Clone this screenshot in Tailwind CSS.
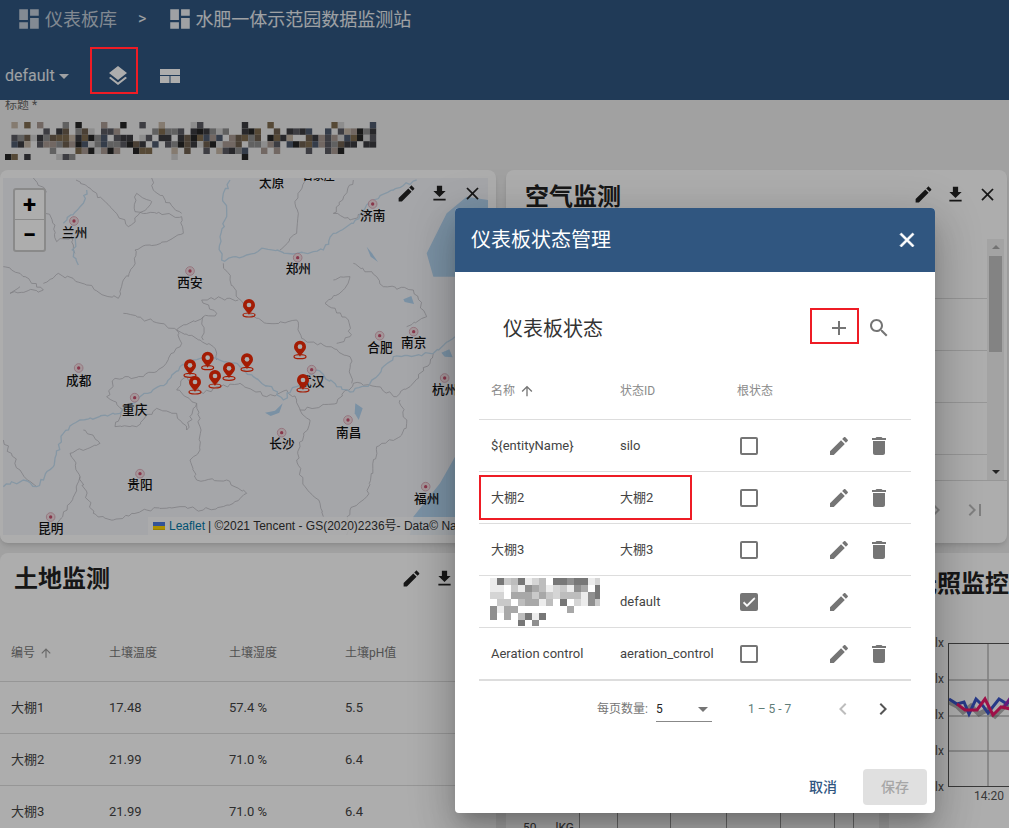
<!DOCTYPE html>
<html lang="zh">
  <head>
    <meta charset="UTF-8" />
    <meta name="viewport" content="width=device-width, initial-scale=1.0" />
    <title>仪表板状态管理</title>
    <script src="https://cdn.jsdelivr.net/npm/@tailwindcss/browser@4"></script>
  </head>
  <body class="font-[family-name:Roboto,'Noto_Sans_CJK_SC',sans-serif] bg-[#eeeeee]">
    <div class="relative h-[828px] w-[1009px] overflow-hidden">
      <!-- Header -->
      <header class="h-[100px] bg-[#305680] text-white">
        <div class="flex h-[38px] items-center pl-[16px]">
          <svg class="h-[26px] w-[26px] text-white/70" viewBox="0 0 24 24" fill="currentColor"><path d="M3 13h8V3H3v10zm0 8h8v-6H3v6zm10 0h8V11h-8v10zm0-18v6h8V3h-8z" /></svg>
          <span class="ml-[3px] text-[18px] text-white/70">仪表板库</span>
          <span class="ml-[21px] text-[16px] text-white/90">&gt;</span>
          <svg class="ml-[21px] h-[26px] w-[26px] text-white/90" viewBox="0 0 24 24" fill="currentColor"><path d="M3 13h8V3H3v10zm0 8h8v-6H3v6zm10 0h8V11h-8v10zm0-18v6h8V3h-8z" /></svg>
          <span class="ml-[2px] text-[18px] text-white/90">水肥一体示范园数据监测站</span>
        </div>
        <div class="flex h-[62px] items-center pl-[5px] pt-[14px]">
          <span class="text-[16px] text-white/90">default</span>
          <span class="ml-[4px] h-0 w-0 border-x-[5px] border-t-[5px] border-x-transparent border-t-white/90"></span>
          <svg class="ml-[37px] h-[24px] w-[24px]" viewBox="0 0 24 24" fill="white"><path d="M11.99 18.54l-7.37-5.73L3 14.07l9 7 9-7-1.63-1.27-7.38 5.74zM12 16l7.36-5.73L21 9l-9-7-9 7 1.63 1.27L12 16z" /></svg>
          <svg class="ml-[30px] h-[14px] w-[20px]" viewBox="0 0 20 14" fill="white"><path d="M0 0h20v6H0zM0 7h9.5v7H0zM10.5 7H20v7h-9.5z" /></svg>
        </div>
      </header>

      <!-- Dashboard title -->
      <div class="h-[70px] pl-[5px]">
        <div class="h-[12px] overflow-hidden text-[12px] leading-[10px] text-[#666]">标题 *</div>
        <svg id="title-mosaic" class="mt-[10px] block" width="374" height="38"></svg>
      </div>

      <!-- Row 1 -->
      <div class="flex gap-[10px]">
        <section class="relative h-[373px] w-[496px] shrink-0 rounded-[8px] bg-white pl-[3px] pt-[8px] shadow-md">
          <div class="relative h-[357px] w-[485px] overflow-hidden bg-[#f4f5fa]">
            <svg class="block" width="485" height="357" viewBox="9 24 1455 1071">
              <g fill="#b4d6f2">
                <path d="M1250 24H1464V90L1400 80L1340 130L1280 250L1300 320L1464 320V24Z" />
                <path d="M1365 860L1320 940L1240 1040L1230 1095H1464V860Z" />
                <path d="M795 728L825 722L848 700L838 728L812 738Z" />
                <path d="M1066 700L1088 715L1076 750L1064 730Z" />
                <path d="M1210 388L1234 378L1242 402L1214 396Z" />
                <path d="M1324 548L1348 538L1358 562L1334 560Z" />
                <path d="M1100 230L1116 250L1134 276L1112 260Z" />
              </g>
              <g class="rough" fill="none" stroke="#b6b6bc" stroke-width="2.2">
                <path d="M100 24L135 58L130 120L165 165L170 215L215 200L225 250" />
                <path d="M228 30L290 70L330 110L385 170L455 95L410 70L405 125L470 130L545 140L550 190L500 215L450 225L405 240L400 290L370 330L355 385L300 370L260 345L175 310L130 340" />
                <path d="M455 24L460 60L545 130" />
                <path d="M670 280L690 330L715 385L755 435L800 460L890 450L905 505L980 530L1050 560L1055 640" />
                <path d="M920 24L885 100L895 130L890 190L840 240" />
                <path d="M1060 30L1000 130L1050 150L1110 125" />
                <path d="M1000 330L1050 320L1030 360L975 400L1045 450L1050 500L1010 520" />
                <path d="M530 480L610 440L650 430L605 390L665 385L715 390" />
                <path d="M370 430L480 460L530 480L600 510L640 530L650 570" />
                <path d="M610 440L610 510" />
                <path d="M530 480L545 520L490 590L430 620L345 625L320 680L370 720L345 770L410 770L470 715L530 730L560 780L590 700L600 770L600 840L570 870L590 930L680 930L740 970L700 1000L610 1020L540 1010L440 1020L340 1050L280 1030L240 920L210 850L300 820L250 780" />
                <path d="M590 700L530 660L560 620L610 670L660 650L720 640L800 680L860 660L890 690L900 720L930 750L900 830L890 870L915 950L960 1000L970 1040" />
                <path d="M900 720L1010 700L1060 640L1130 650L1190 680L1230 650L1290 580L1300 550" />
                <path d="M1040 1095L1050 1020L1100 980L1130 830L1200 800L1220 760L1200 690" />
                <path d="M1060 280L1130 320L1150 350L1240 360L1280 440L1220 470" />
                <path d="M10 290L60 310L130 360L30 370L60 350" />
                <path d="M10 810L60 900L110 950" />
                <path d="M150 1095L210 1000L240 920" />
              </g>
              <g class="rough" fill="none" stroke="#c6dff2" stroke-width="4">
                <path d="M690 30L670 70L680 140L660 200L665 270L730 260L790 235L890 250L970 240L1000 190L1060 160L1120 90L1180 60L1250 30" />
                <path d="M10 950L70 930L110 950L160 890L190 790L240 750L360 730L420 680L500 640L540 590L580 570L650 565L720 590L760 620L820 660L850 690L890 650L950 600L1010 650L1060 665L1110 640L1180 560L1300 550L1365 500" />
                <path d="M225 200L220 260L235 285" />
                <path d="M260 60L250 100L190 160" />
              </g>
              <g font-size="38" font-weight="500" fill="#111" text-anchor="middle" dominant-baseline="central">
                <text x="815" y="38">太原</text>
                <text x="955" y="18" font-size="33">石家庄</text>
                <text x="1118" y="135">济南</text>
                <text x="224" y="188">兰州</text>
                <text x="895" y="296">郑州</text>
                <text x="570" y="338">西安</text>
                <text x="1140" y="533">合肥</text>
                <text x="1241" y="518">南京</text>
                <text x="236" y="630">成都</text>
                <text x="935" y="634">武汉</text>
                <text x="1334" y="659">杭州</text>
                <text x="404" y="719">重庆</text>
                <text x="1046" y="786">南昌</text>
                <text x="846" y="820">长沙</text>
                <text x="420" y="943">贵阳</text>
                <text x="1280" y="986">福州</text>
                <text x="152" y="1076">昆明</text>
              </g>
              <g fill="#f2dfe4" stroke="#d9a5b3" stroke-width="2.5">
                <circle cx="1118" cy="102" r="13" /><circle cx="222" cy="153" r="13" /><circle cx="893" cy="263" r="13" /><circle cx="570" cy="303" r="13" /><circle cx="1139" cy="497" r="13" /><circle cx="1241" cy="485" r="13" /><circle cx="236" cy="594" r="13" /><circle cx="935" cy="599" r="13" /><circle cx="1334" cy="624" r="13" /><circle cx="404" cy="683" r="13" /><circle cx="1044" cy="750" r="13" /><circle cx="845" cy="788" r="13" /><circle cx="420" cy="911" r="13" /><circle cx="1277" cy="950" r="13" /><circle cx="152" cy="1041" r="13" />
              </g>
              <g fill="#c9516f">
                <circle cx="1118" cy="102" r="5" /><circle cx="222" cy="153" r="5" /><circle cx="893" cy="263" r="5" /><circle cx="570" cy="303" r="5" /><circle cx="1139" cy="497" r="5" /><circle cx="1241" cy="485" r="5" /><circle cx="236" cy="594" r="5" /><circle cx="935" cy="599" r="5" /><circle cx="1334" cy="624" r="5" /><circle cx="404" cy="683" r="5" /><circle cx="1044" cy="750" r="5" /><circle cx="845" cy="788" r="5" /><circle cx="420" cy="911" r="5" /><circle cx="1277" cy="950" r="5" /><circle cx="152" cy="1041" r="5" />
              </g>
              <defs>
                <g id="pin">
                  <ellipse cx="0" cy="0" rx="18" ry="6" fill="none" stroke="#f02a06" stroke-width="3.5" />
                  <path d="M0 0C-6 -12 -18 -18 -18 -30A18 18 0 1 1 18 -30C18 -18 6 -12 0 0Z" fill="#f02a06" />
                  <circle cx="0" cy="-30" r="7" fill="#fff" />
                </g>
              </defs>
              <use href="#pin" x="747" y="435" /><use href="#pin" x="900" y="560" /><use href="#pin" x="623" y="593" /><use href="#pin" x="570" y="616" /><use href="#pin" x="741" y="598" /><use href="#pin" x="687" y="625" /><use href="#pin" x="645" y="648" /><use href="#pin" x="585" y="666" /><use href="#pin" x="909" y="660" />
            </svg>

            <!-- Zoom control -->
            <div class="absolute left-[10px] top-[10px] w-[33px] overflow-hidden rounded-[3px] border-2 border-black/20 bg-white text-black">
              <div class="flex h-[30px] items-center justify-center border-b border-[#ccc] text-[24px] font-bold leading-none">+</div>
              <div class="flex h-[30px] items-center justify-center text-[24px] font-bold leading-none">−</div>
            </div>

            <!-- Attribution -->
            <div class="absolute bottom-0 left-[145px] flex h-[18px] items-center whitespace-nowrap bg-white/80 pl-[5px] font-[family-name:'Liberation_Sans','Noto_Sans_CJK_SC',sans-serif] text-[12px] text-[#333]">
              <svg class="mr-[4px]" width="12" height="8" viewBox="0 0 12 8"><path fill="#4C7BE1" d="M0 0h12v4H0z" /><path fill="#FFD500" d="M0 4h12v3H0z" /><path fill="#E0BC00" d="M0 7h12v1H0z" /></svg>
              <span class="border-b border-[#0078A8] text-[#0078A8]">Leaflet</span>
              <span class="ml-[3px]">| ©2021 Tencent - GS(2020)2236号- Data© NavInfo</span>
            </div>
          </div>
          <div class="absolute right-[13px] top-[13px] flex gap-[12px] text-[#222]">
            <svg class="h-[21px] w-[21px]" viewBox="0 0 24 24" fill="currentColor"><path d="M3 17.25V21h3.75L17.81 9.94l-3.75-3.75L3 17.25zM20.71 7.04c.39-.39.39-1.02 0-1.41l-2.34-2.34c-.39-.39-1.02-.39-1.41 0l-1.83 1.83 3.75 3.75 1.83-1.83z" /></svg>
            <svg class="h-[21px] w-[21px]" viewBox="0 0 24 24" fill="currentColor"><path d="M19 9h-4V3H9v6H5l7 7 7-7zM5 18v2h14v-2H5z" /></svg>
            <svg class="h-[21px] w-[21px]" viewBox="0 0 24 24" fill="currentColor"><path d="M19 6.41L17.59 5 12 10.59 6.41 5 5 6.41 10.59 12 5 17.59 6.41 19 12 13.41 17.59 19 19 17.59 13.41 12z" /></svg>
          </div>
        </section>

        <section class="relative h-[373px] w-[501px] shrink-0 rounded-[8px] bg-white shadow-md">
          <div class="flex h-[69px] items-start justify-between pl-[19px] pr-[9px] pt-[14px]">
            <h2 class="text-[24px] font-bold leading-[26px] text-[#222]">空气监测</h2>
            <div class="flex gap-[11px] text-[#222]">
              <svg class="h-[21px] w-[21px]" viewBox="0 0 24 24" fill="currentColor"><path d="M3 17.25V21h3.75L17.81 9.94l-3.75-3.75L3 17.25zM20.71 7.04c.39-.39.39-1.02 0-1.41l-2.34-2.34c-.39-.39-1.02-.39-1.41 0l-1.83 1.83 3.75 3.75 1.83-1.83z" /></svg>
              <svg class="h-[21px] w-[21px]" viewBox="0 0 24 24" fill="currentColor"><path d="M19 9h-4V3H9v6H5l7 7 7-7zM5 18v2h14v-2H5z" /></svg>
              <svg class="h-[21px] w-[21px]" viewBox="0 0 24 24" fill="currentColor"><path d="M19 6.41L17.59 5 12 10.59 6.41 5 5 6.41 10.59 12 5 17.59 6.41 19 12 13.41 17.59 19 19 17.59 13.41 12z" /></svg>
            </div>
          </div>
          <div class="flex h-[242px] border-b border-[#ddd] pr-[3px]">
            <div class="flex-1">
              <div class="h-[60px] border-b border-[#ddd]"></div>
              <div class="h-[52px] border-b border-[#ddd]"></div>
              <div class="h-[52px] border-b border-[#ddd]"></div>
              <div class="h-[52px] border-b border-[#ddd]"></div>
            </div>
            <div class="flex w-[17px] flex-col items-center bg-[#f1f1f1] text-[#777]">
              <div class="mt-[6px] h-0 w-0 border-x-[4px] border-b-[4px] border-x-transparent border-b-[#aaa]"></div>
              <div class="mt-[7px] h-[96px] w-[13px] bg-[#c1c1c1]"></div>
              <div class="mb-[6px] mt-auto h-0 w-0 border-x-[4px] border-t-[4px] border-x-transparent border-t-[#333]"></div>
            </div>
          </div>
          <div class="flex justify-end gap-[15px] pr-[20px] pt-[17px] text-[#bbb]">
            <svg class="h-[24px] w-[24px]" viewBox="0 0 24 24" fill="currentColor"><path d="M10 6L8.59 7.41 13.17 12l-4.58 4.58L10 18l6-6z" /></svg>
            <svg class="h-[24px] w-[24px]" viewBox="0 0 24 24" fill="currentColor"><path d="M5.59 7.41L10.18 12l-4.59 4.59L7 18l6-6-6-6zM16 6h2v12h-2z" /></svg>
          </div>
        </section>
      </div>

      <!-- Row 2 -->
      <div class="mt-[10px] flex gap-[10px]">
        <section class="h-[300px] w-[496px] shrink-0 rounded-t-[8px] bg-white">
          <div class="flex h-[70px] items-start justify-between pl-[14px] pr-[41px] pt-[12px]">
            <h2 class="text-[24px] font-bold leading-[28px] text-[#222]">土地监测</h2>
            <div class="flex gap-[12px] pt-[3px] text-[#222]">
              <svg class="h-[21px] w-[21px]" viewBox="0 0 24 24" fill="currentColor"><path d="M3 17.25V21h3.75L17.81 9.94l-3.75-3.75L3 17.25zM20.71 7.04c.39-.39.39-1.02 0-1.41l-2.34-2.34c-.39-.39-1.02-.39-1.41 0l-1.83 1.83 3.75 3.75 1.83-1.83z" /></svg>
              <svg class="h-[21px] w-[21px]" viewBox="0 0 24 24" fill="currentColor"><path d="M19 9h-4V3H9v6H5l7 7 7-7zM5 18v2h14v-2H5z" /></svg>
            </div>
          </div>
          <div class="grid h-[59px] grid-cols-[98px_120px_116px_1fr] items-center border-b border-[#ddd] pl-[11px] pt-[1px] text-[12px] text-[#777]">
            <span class="flex items-center gap-[4px]">编号
              <svg class="h-[14px] w-[14px] text-[#999]" viewBox="0 0 24 24" fill="currentColor"><path d="M4 12l1.41 1.41L11 7.83V20h2V7.83l5.58 5.59L20 12l-8-8-8 8z" /></svg>
            </span>
            <span>土壤温度</span><span>土壤湿度</span><span>土壤pH值</span>
          </div>
          <div class="grid h-[52px] grid-cols-[98px_120px_116px_1fr] items-center border-b border-[#ddd] pl-[11px] text-[13px] text-[#444]">
            <span>大棚1</span><span>17.48</span><span>57.4 %</span><span>5.5</span>
          </div>
          <div class="grid h-[52px] grid-cols-[98px_120px_116px_1fr] items-center border-b border-[#ddd] pl-[11px] text-[13px] text-[#444]">
            <span>大棚2</span><span>21.99</span><span>71.0 %</span><span>6.4</span>
          </div>
          <div class="grid h-[52px] grid-cols-[98px_120px_116px_1fr] items-center border-b border-[#ddd] pl-[11px] text-[13px] text-[#444]">
            <span>大棚3</span><span>21.99</span><span>71.0 %</span><span>6.4</span>
          </div>
        </section>

        <section class="h-[300px] w-[373px] shrink-0 rounded-t-[8px] bg-white pt-[240px]">
          <div class="grid h-[60px] grid-cols-[74px_38px_53px_56px_54px_54px_19px_25px] text-[12px] text-[#444]">
            <div class="flex justify-between border-r border-[#999] pl-[17px] pr-[5px] pt-[26px]"><span>50</span><span>lKG</span></div>
            <div class="border-r border-[#999]"></div><div class="border-r border-[#999]"></div><div class="border-r border-[#999]"></div><div class="border-r border-[#999]"></div><div class="border-r border-[#999]"></div><div class="border-r border-[#999]"></div><div></div>
          </div>
        </section>

        <section class="h-[300px] w-[130px] shrink-0 rounded-t-[8px] bg-white">
          <div class="h-[83px] whitespace-nowrap pl-[24px] pt-[15px] text-[24px] font-bold leading-[32px] text-[#222]">光照监控</div>
          <div class="flex pl-[46px]">
            <div class="flex h-[158px] w-[13px] flex-col justify-between text-[12px] leading-[14px] text-[#555]">
              <span>lx</span><span>lx</span><span>lx</span><span>lx</span><span>lx</span>
            </div>
            <div class="relative mt-[7px] h-[144px] w-[71px] border-b border-l border-t border-[#555]">
              <svg class="block" width="70" height="142" viewBox="0 0 70 142" fill="none">
                <path d="M0 36H70M0 72H70M0 107H70M39 0V142" stroke="#bbb" stroke-width="1.5" />
                <path d="M0 58L8 62L14 68L22 62L30 70L38 66L46 72L56 62L70 66" stroke="#666" stroke-width="5" opacity=".5" />
                <path d="M0 55L8 60L15 58L20 70L27 55L34 62L39 69L50 55L58 60L64 52L70 57" stroke="#3a55c8" stroke-width="3" />
                <path d="M55 63L62 53L70 60" stroke="#9c27b0" stroke-width="3" />
                <path d="M8 60L16 66L28 66L36 55L44 71L52 63L62 65L70 60" stroke="#e9186b" stroke-width="3" />
              </svg>
              <span class="absolute left-[25px] top-full mt-[3px] text-[12px] leading-[14px] text-[#555]">14:20</span>
            </div>
          </div>
        </section>
      </div>

      <!-- Dim overlay -->
      <div class="absolute inset-0 bg-black/[.32]"></div>

      <!-- Modal -->
      <div class="absolute left-[455px] top-[208px] flex h-[605px] w-[480px] flex-col overflow-hidden rounded-[4px] bg-white shadow-[0_11px_15px_-7px_rgba(0,0,0,.2),0_24px_38px_3px_rgba(0,0,0,.14),0_9px_46px_8px_rgba(0,0,0,.12)]">
        <div class="flex h-[64px] shrink-0 items-center justify-between bg-[#305680] pl-[16px] pr-[16px] text-white">
          <h2 class="text-[20px]">仪表板状态管理</h2>
          <svg class="h-[24px] w-[24px]" viewBox="0 0 24 24" fill="white" stroke="white" stroke-width=".7"><path d="M19 6.41L17.59 5 12 10.59 6.41 5 5 6.41 10.59 12 5 17.59 6.41 19 12 13.41 17.59 19 19 17.59 13.41 12z" /></svg>
        </div>

        <div class="mx-[24px] flex flex-1 flex-col">
          <div class="mt-[36px] flex h-[40px] items-center pl-[24px] pr-[20px]">
            <h3 class="flex-1 pt-[2px] text-[20px] font-normal text-[#333]">仪表板状态</h3>
            <svg class="h-[24px] w-[24px] text-[#757575]" viewBox="0 0 24 24" fill="currentColor"><path d="M19 13h-6v6h-2v-6H5v-2h6V5h2v6h6v2z" /></svg>
            <svg class="ml-[16px] h-[24px] w-[24px] text-[#757575]" viewBox="0 0 24 24" fill="currentColor"><path d="M15.5 14h-.79l-.28-.27C15.41 12.59 16 11.11 16 9.5 16 5.91 13.09 3 9.5 3S3 5.91 3 9.5 5.91 16 9.5 16c1.61 0 3.09-.59 4.23-1.57l.27.28v.79l5 4.99L20.49 19l-4.99-5zm-6 0C7.01 14 5 11.99 5 9.5S7.01 5 9.5 5 14 7.01 14 9.5 11.99 14 9.5 14z" /></svg>
          </div>

          <div class="mt-[13px] grid h-[59px] grid-cols-[129px_117px_1fr] items-center border-b border-[#ddd] pl-[12px] pt-[1px] text-[12px] text-[#8a8a8a]">
            <span class="flex items-center gap-[4px]">名称
              <svg class="h-[16px] w-[16px] text-[#757575]" viewBox="0 0 24 24" fill="currentColor"><path d="M4 12l1.41 1.41L11 7.83V20h2V7.83l5.58 5.59L20 12l-8-8-8 8z" /></svg>
            </span>
            <span>状态ID</span>
            <span>根状态</span>
          </div>

          <div class="grid h-[52px] grid-cols-[129px_117px_90px_1fr] items-center border-b border-[#ddd] pl-[12px] text-[13px] text-[#444]">
            <span>${entityName}</span><span>silo</span>
            <span class="ml-[3px] h-[18px] w-[18px] rounded-[2px] border-2 border-[#757575]"></span>
            <span class="flex gap-[16px] text-[#757575]">
              <svg class="h-[24px] w-[24px]" viewBox="0 0 24 24" fill="currentColor"><path d="M3 17.25V21h3.75L17.81 9.94l-3.75-3.75L3 17.25zM20.71 7.04c.39-.39.39-1.02 0-1.41l-2.34-2.34c-.39-.39-1.02-.39-1.41 0l-1.83 1.83 3.75 3.75 1.83-1.83z" /></svg>
              <svg class="h-[24px] w-[24px]" viewBox="0 0 24 24" fill="currentColor"><path d="M6 19c0 1.1.9 2 2 2h8c1.1 0 2-.9 2-2V7H6v12zM19 4h-3.5l-1-1h-5l-1 1H5v2h14V4z" /></svg>
            </span>
          </div>
          <div class="grid h-[52px] grid-cols-[129px_117px_90px_1fr] items-center border-b border-[#ddd] pl-[12px] text-[13px] text-[#444]">
            <span>大棚2</span><span>大棚2</span>
            <span class="ml-[3px] h-[18px] w-[18px] rounded-[2px] border-2 border-[#757575]"></span>
            <span class="flex gap-[16px] text-[#757575]">
              <svg class="h-[24px] w-[24px]" viewBox="0 0 24 24" fill="currentColor"><path d="M3 17.25V21h3.75L17.81 9.94l-3.75-3.75L3 17.25zM20.71 7.04c.39-.39.39-1.02 0-1.41l-2.34-2.34c-.39-.39-1.02-.39-1.41 0l-1.83 1.83 3.75 3.75 1.83-1.83z" /></svg>
              <svg class="h-[24px] w-[24px]" viewBox="0 0 24 24" fill="currentColor"><path d="M6 19c0 1.1.9 2 2 2h8c1.1 0 2-.9 2-2V7H6v12zM19 4h-3.5l-1-1h-5l-1 1H5v2h14V4z" /></svg>
            </span>
          </div>
          <div class="grid h-[52px] grid-cols-[129px_117px_90px_1fr] items-center border-b border-[#ddd] pl-[12px] text-[13px] text-[#444]">
            <span>大棚3</span><span>大棚3</span>
            <span class="ml-[3px] h-[18px] w-[18px] rounded-[2px] border-2 border-[#757575]"></span>
            <span class="flex gap-[16px] text-[#757575]">
              <svg class="h-[24px] w-[24px]" viewBox="0 0 24 24" fill="currentColor"><path d="M3 17.25V21h3.75L17.81 9.94l-3.75-3.75L3 17.25zM20.71 7.04c.39-.39.39-1.02 0-1.41l-2.34-2.34c-.39-.39-1.02-.39-1.41 0l-1.83 1.83 3.75 3.75 1.83-1.83z" /></svg>
              <svg class="h-[24px] w-[24px]" viewBox="0 0 24 24" fill="currentColor"><path d="M6 19c0 1.1.9 2 2 2h8c1.1 0 2-.9 2-2V7H6v12zM19 4h-3.5l-1-1h-5l-1 1H5v2h14V4z" /></svg>
            </span>
          </div>
          <div class="grid h-[52px] grid-cols-[129px_117px_90px_1fr] items-center border-b border-[#ddd] pl-[12px] text-[13px] text-[#444]">
            <svg id="name-mosaic" width="110" height="48" class="-ml-[1px]"></svg>
            <span>default</span>
            <span class="ml-[3px] flex h-[18px] w-[18px] items-center justify-center rounded-[2px] bg-[#757575]">
              <svg class="h-[16px] w-[16px]" viewBox="0 0 24 24" fill="white" stroke="white"><path d="M9 16.17L4.83 12l-1.42 1.41L9 19 21 7l-1.41-1.41z" /></svg>
            </span>
            <span class="flex gap-[16px] text-[#757575]">
              <svg class="h-[24px] w-[24px]" viewBox="0 0 24 24" fill="currentColor"><path d="M3 17.25V21h3.75L17.81 9.94l-3.75-3.75L3 17.25zM20.71 7.04c.39-.39.39-1.02 0-1.41l-2.34-2.34c-.39-.39-1.02-.39-1.41 0l-1.83 1.83 3.75 3.75 1.83-1.83z" /></svg>
            </span>
          </div>
          <div class="grid h-[53px] grid-cols-[129px_117px_90px_1fr] items-center border-b-2 border-[#ddd] pl-[12px] text-[13px] text-[#444]">
            <span>Aeration control</span><span>aeration_control</span>
            <span class="ml-[3px] h-[18px] w-[18px] rounded-[2px] border-2 border-[#757575]"></span>
            <span class="flex gap-[16px] text-[#757575]">
              <svg class="h-[24px] w-[24px]" viewBox="0 0 24 24" fill="currentColor"><path d="M3 17.25V21h3.75L17.81 9.94l-3.75-3.75L3 17.25zM20.71 7.04c.39-.39.39-1.02 0-1.41l-2.34-2.34c-.39-.39-1.02-.39-1.41 0l-1.83 1.83 3.75 3.75 1.83-1.83z" /></svg>
              <svg class="h-[24px] w-[24px]" viewBox="0 0 24 24" fill="currentColor"><path d="M6 19c0 1.1.9 2 2 2h8c1.1 0 2-.9 2-2V7H6v12zM19 4h-3.5l-1-1h-5l-1 1H5v2h14V4z" /></svg>
            </span>
          </div>

          <!-- Pagination -->
          <div class="flex h-[56px] items-center pl-[118px] text-[12px] text-[#757575]">
            <span class="w-[59px]">每页数量:</span>
            <span class="flex h-[26px] w-[56px] items-center justify-between border-b border-[#888] pr-[4px] pt-[1px] text-[#222]">5
              <span class="h-0 w-0 border-x-[5px] border-t-[5px] border-x-transparent border-t-[#757575]"></span>
            </span>
            <span class="ml-[36px] w-[60px] text-[#5f7d78]">1 – 5 - 7</span>
            <svg class="ml-[23px] h-[24px] w-[24px] text-[#bdbdbd]" viewBox="0 0 24 24" fill="currentColor"><path d="M15.41 7.41L14 6l-6 6 6 6 1.41-1.41L10.83 12z" /></svg>
            <svg class="ml-[16px] h-[24px] w-[24px] text-[#555]" viewBox="0 0 24 24" fill="currentColor"><path d="M10 6L8.59 7.41 13.17 12l-4.58 4.58L10 18l6-6z" /></svg>
          </div>
        </div>

        <div class="flex shrink-0 items-center justify-end pb-[8px] pr-[8px]">
          <button class="mr-[26px] text-[14px] font-medium text-[#305680]">取消</button>
          <button class="h-[36px] w-[64px] rounded-[4px] bg-[#e0e0e0] text-[14px] font-medium text-[#a6a6a6]">保存</button>
        </div>
      </div>

      <!-- Annotation boxes -->
      <div class="absolute left-[90px] top-[47px] h-[47px] w-[48px] border-2 border-[#ee1c25]"></div>
      <div class="absolute left-[810px] top-[308px] h-[36px] w-[49px] border-2 border-[#ee1c25]"></div>
      <div class="absolute left-[479px] top-[475px] h-[45px] w-[213px] border-2 border-[#ee1c25]"></div>
    </div>

    <script>
      var seed = 7;
      function rnd() { seed = (seed * 16807) % 2147483647; return seed / 2147483647; }

      // pixelated blocks that hide the real names in the screenshot
      function mosaic(id, cols, rows, size, colors, keep) {
        var out = "";
        for (var y = 0; y < rows; y++) {
          for (var x = 0; x < cols; x++) {
            if (!keep(x, y, rnd())) continue;
            var c = colors[Math.floor(rnd() * colors.length)];
            out += '<rect x="' + x * size + '" y="' + y * size + '" width="' + size + '" height="' + size + '" fill="' + c + '"/>';
          }
        }
        document.getElementById(id).innerHTML = out;
      }
      mosaic("title-mosaic", 58, 6, 6.4,
        ["#3b3b40", "#6d5f4e", "#8f8f90", "#c4b6a6", "#4f5a6e", "#7f6c50", "#d0d0d0", "#262626", "#a89a92", "#5a5a62", "#3b3b40"],
        function (x, y, r) {
          var band = x < 7 || (x > 42 && x < 52) ? 0.75 : 0.3;
          if (y == 0) return r > 0.7;
          if (y == 5) return r > 0.8 && x < 50;
          if (y == 1) return r > band;
          if (y == 4) return x < 54 && r > band;
          return x > 0 && r > 0.1;
        });
      mosaic("name-mosaic", 18, 7, 7,
        ["#bdbdbd", "#8f8f8f", "#d5d5d5", "#a8a8a8", "#ececec", "#777777", "#c9c9c9"],
        function (x, y, r) {
          if (y == 5) return x < 9 && r > 0.3;
          if (y == 6) return x < 7 && r > 0.7;
          if (y == 4) return x < 3 || r > 0.85;
          return x < 17 && r > 0.12;
        });

      // borders and rivers on the map are wiggly, not straight segments
      document.querySelectorAll(".rough path").forEach(function (p) {
        var pts = p.getAttribute("d").slice(1).split("L").map(function (s) { return s.split(" ").map(Number); });
        var d = "M" + pts[0].join(" ");
        for (var i = 1; i < pts.length; i++) {
          var a = pts[i - 1], b = pts[i];
          var n = Math.max(1, Math.round(Math.hypot(b[0] - a[0], b[1] - a[1]) / 11));
          for (var k = 1; k <= n; k++) {
            var t = k / n, j = k == n ? 0 : 11;
            d += "L" + (a[0] + (b[0] - a[0]) * t + (rnd() - 0.5) * j) + " " + (a[1] + (b[1] - a[1]) * t + (rnd() - 0.5) * j);
          }
        }
        p.setAttribute("d", d);
      });
    </script>
  </body>
</html>
